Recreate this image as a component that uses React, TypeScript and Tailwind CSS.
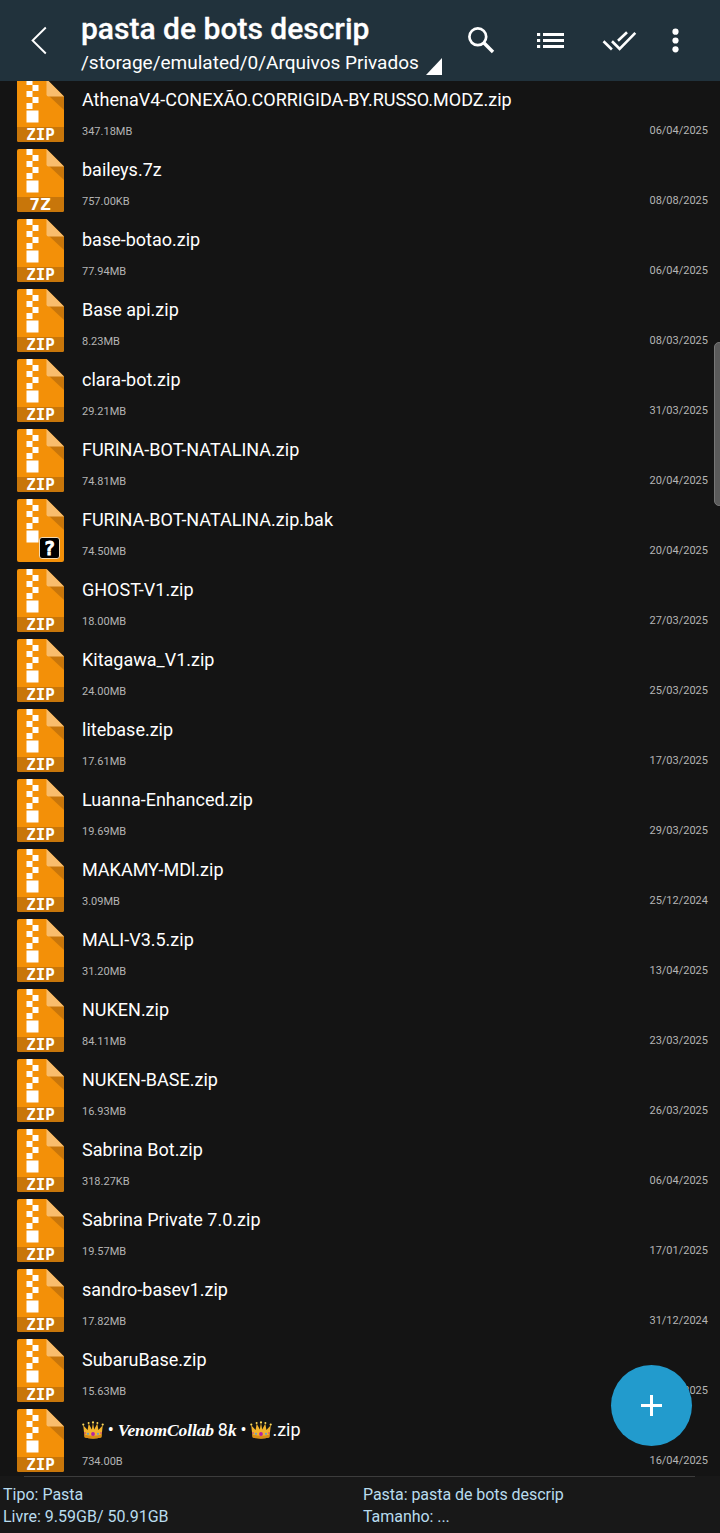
import React from "react";

type Kind = "ZIP" | "7Z" | "BAK";

interface FileEntry {
  name: React.ReactNode;
  size: string;
  date: string;
  kind?: Kind;
}

function Crown() {
  return (
    <svg viewBox="0 0 22 18" className="inline-block h-[18px] w-[22px] align-[-3px]" aria-hidden="true">
      <path d="M2.6 16.2 1.2 4.2 5.6 9 6.7 2.4 9.8 8.4 11 1.6l1.2 6.8 3.1-6L16.4 9l4.4-4.8-1.4 12Q11 18.6 2.6 16.2Z" fill="#f3b32b" />
      <path d="M2.4 13.4Q11 16 19.6 13.4l-.3 3.2Q11 18.8 2.7 16.6Z" fill="#d98c17" />
      <g fill="#fbd75b">
        <circle cx="1.3" cy="3.6" r="1.1" />
        <circle cx="6.6" cy="2.1" r="1" />
        <circle cx="11" cy="1.4" r="1.1" />
        <circle cx="15.4" cy="2.1" r="1" />
        <circle cx="20.7" cy="3.6" r="1.1" />
      </g>
      <circle cx="11" cy="13" r="1.9" fill="#b521a5" />
      <circle cx="6" cy="12.8" r="1.1" fill="#6f9fc0" />
      <circle cx="16" cy="12.8" r="1.1" fill="#6f9fc0" />
      <circle cx="3" cy="12" r=".8" fill="#c9308f" />
      <circle cx="19" cy="12" r=".8" fill="#c9308f" />
    </svg>
  );
}

const mathClass = "font-['Liberation_Serif',serif] font-bold italic text-[17.5px] tracking-[-0.1px]";

const files: FileEntry[] = [
  { name: "AthenaV4-CONEXÃO.CORRIGIDA-BY.RUSSO.MODZ.zip", size: "347.18MB", date: "06/04/2025" },
  { name: "baileys.7z", size: "757.00KB", date: "08/08/2025", kind: "7Z" },
  { name: "base-botao.zip", size: "77.94MB", date: "06/04/2025" },
  { name: "Base api.zip", size: "8.23MB", date: "08/03/2025" },
  { name: "clara-bot.zip", size: "29.21MB", date: "31/03/2025" },
  { name: "FURINA-BOT-NATALINA.zip", size: "74.81MB", date: "20/04/2025" },
  { name: "FURINA-BOT-NATALINA.zip.bak", size: "74.50MB", date: "20/04/2025", kind: "BAK" },
  { name: "GHOST-V1.zip", size: "18.00MB", date: "27/03/2025" },
  { name: "Kitagawa_V1.zip", size: "24.00MB", date: "25/03/2025" },
  { name: "litebase.zip", size: "17.61MB", date: "17/03/2025" },
  { name: "Luanna-Enhanced.zip", size: "19.69MB", date: "29/03/2025" },
  { name: "MAKAMY-MDl.zip", size: "3.09MB", date: "25/12/2024" },
  { name: "MALI-V3.5.zip", size: "31.20MB", date: "13/04/2025" },
  { name: "NUKEN.zip", size: "84.11MB", date: "23/03/2025" },
  { name: "NUKEN-BASE.zip", size: "16.93MB", date: "26/03/2025" },
  { name: "Sabrina Bot.zip", size: "318.27KB", date: "06/04/2025" },
  { name: "Sabrina Private 7.0.zip", size: "19.57MB", date: "17/01/2025" },
  { name: "sandro-basev1.zip", size: "17.82MB", date: "31/12/2024" },
  { name: "SubaruBase.zip", size: "15.63MB", date: "16/04/2025" },
  {
    name: (
      <span className="[word-spacing:-0.6px]">
        <Crown /> • <span className={mathClass}>VenomCollab</span> 8<span className={mathClass}>k</span> • <Crown />
        .zip
      </span>
    ),
    size: "734.00B",
    date: "16/04/2025",
  },
];

function ArchiveIcon({ kind }: { kind: Kind }) {
  return (
    <div className="relative mt-[3px] h-[63px] w-[47px] shrink-0">
      <svg viewBox="0 0 47 63" className="block h-[63px] w-[47px]" aria-hidden="true">
        <path d="M2 0H29.5L47 17.5V61a2 2 0 0 1-2 2H2a2 2 0 0 1-2-2V2A2 2 0 0 1 2 0Z" fill="#f39008" />
        <path d="M32 17H47V31Z" fill="#c8760a" />
        <path d="M29.5 0 47 17.5H31.5a2 2 0 0 1-2-2Z" fill="#f9bd6c" />
        <g fill="#fff">
          <path d="M9.5 0h6v6h-6ZM15.5 6h6v6h-6ZM9.5 12h6v6h-6ZM15.5 18h6v6h-6ZM9.5 24h6v6h-6Z" />
          <rect x="9.5" y="31.5" width="12" height="12" />
        </g>
        {kind !== "BAK" && <path d="M0 48H47V61a2 2 0 0 1-2 2H2a2 2 0 0 1-2-2Z" fill="#c8760a" />}
      </svg>
      {kind === "BAK" && (
        <span className="absolute top-[38px] left-[22px] flex h-[22px] w-[21px] items-center justify-center rounded-[3px] border border-[#f3d9b0] bg-black font-['DejaVu_Sans_Mono',monospace] text-[19px] leading-none font-bold text-white [-webkit-text-stroke:0.8px_white]">
          ?
        </span>
      )}
      {kind === "ZIP" && (
        <span className="absolute inset-x-0 top-[48px] scale-x-[1.05] text-center font-['DejaVu_Sans_Mono',monospace] text-[15px] leading-[16px] font-bold text-white">
          ZIP
        </span>
      )}
      {kind === "7Z" && (
        <span className="absolute inset-x-0 top-[48px] text-center font-['DejaVu_Sans_Mono',monospace] text-[15px] leading-[16px] font-bold text-white">
          <span className="inline-block scale-x-[1.2]">7Z</span>
        </span>
      )}
    </div>
  );
}

function FileRow({ file }: { file: FileEntry }) {
  return (
    <li className="flex h-[70px] shrink-0 pr-3 pl-[17px]">
      <ArchiveIcon kind={file.kind ?? "ZIP"} />
      <div className="ml-[18px] flex flex-1 flex-col">
        <div className="mt-3 h-6 text-[18px] leading-6 whitespace-nowrap text-white">{file.name}</div>
        <div className="mt-3 flex justify-between text-[11px] leading-[14px] text-[#b5b5b5]">
          <span className="mt-px">{file.size}</span>
          <span>{file.date}</span>
        </div>
      </div>
    </li>
  );
}

function Header() {
  return (
    <header className="flex h-[81px] shrink-0 bg-[#21323c] text-white">
      <svg viewBox="0 0 81 81" className="h-[81px] w-[81px] shrink-0" fill="none" stroke="#fff" strokeWidth="1.9" aria-hidden="true">
        <path d="M45.8 27.5 32.6 40.5l13.2 13" />
      </svg>
      <div className="w-[368px] shrink-0 whitespace-nowrap">
        <h1 className="mt-[11px] text-[30px] leading-9 font-medium [-webkit-text-stroke:0.3px_white]">pasta de bots descrip</h1>
        <div className="mt-[4px] flex text-[19px] leading-6">
          <span>/storage/emulated/0/Arquivos Privados</span>
          <svg viewBox="0 0 17 17" className="mt-[7px] ml-[7px] h-[17px] w-[17px]" aria-hidden="true">
            <path d="M16 0V17H0Z" fill="#fff" />
          </svg>
        </div>
      </div>
      <svg viewBox="449 0 271 81" className="h-[81px] w-[271px] shrink-0" aria-hidden="true">
        <g fill="none" stroke="#fff">
          <circle cx="477.8" cy="36.8" r="8.4" strokeWidth="2.7" />
          <path d="m483.8 42.8 9.2 9.2" strokeWidth="3.4" />
          <path d="m603.5 41.3 8.4 8.2M612 41.3l7.6 7.5 15.7-16M618 40.8l9-8.6" strokeWidth="2.6" />
        </g>
        <g fill="#fff">
          <path d="M537 33h3.2v3H537zM537 39h3.2v3H537zM537 45h3.2v3H537zM543 33h21v3H543zM543 39h21v3H543zM543 45h21v3H543z" />
          <circle cx="675.5" cy="31.7" r="3.1" />
          <circle cx="675.5" cy="40.5" r="3.1" />
          <circle cx="675.5" cy="49.3" r="3.1" />
        </g>
      </svg>
    </header>
  );
}

export default function App() {
  return (
    <div className="relative flex h-[1533px] w-[720px] flex-col overflow-hidden bg-[#141414] font-[Roboto,sans-serif]">
      <Header />
      <main className="h-[1395px] shrink-0 overflow-hidden">
        <ul className="-mt-[5px] flex flex-col">
          {files.map((file, i) => (
            <FileRow key={i} file={file} />
          ))}
        </ul>
      </main>
      <footer className="flex flex-1 flex-col bg-[#181818] text-[16px] leading-[22px] text-[#b9dcee]">
        <div className="mr-[25px] ml-6 h-px bg-[#3c3c3c]" />
        <div className="mt-[7px] grid grid-cols-2">
          <div className="pl-[3px]">
            <p>Tipo: Pasta</p>
            <p>Livre: 9.59GB/ 50.91GB</p>
          </div>
          <div className="pl-[3px] tracking-[-0.05px]">
            <p>Pasta: pasta de bots descrip</p>
            <p>Tamanho: ...</p>
          </div>
        </div>
      </footer>
      <div className="absolute top-[342px] right-[-4px] h-[164px] w-[10px] rounded-[5px] border border-[#777] bg-[#5a5a5a]" />
      <button
        aria-label="Adicionar"
        className="absolute top-[1365px] left-[611px] flex h-[81px] w-[81px] items-center justify-center rounded-full bg-[#229bcd]"
      >
        <svg viewBox="0 0 21 21" className="h-[21px] w-[21px]" aria-hidden="true">
          <path d="M10.5 0V21M0 10.5H21" stroke="#fff" strokeWidth="3" />
        </svg>
      </button>
    </div>
  );
}
